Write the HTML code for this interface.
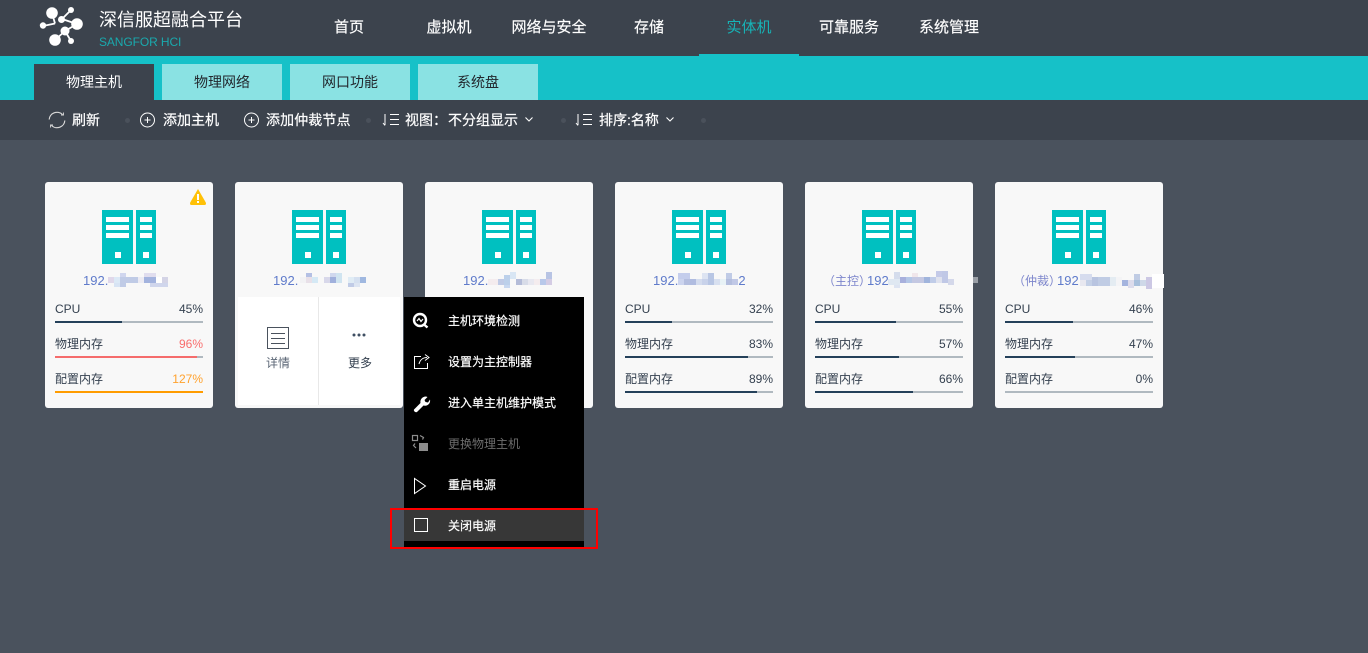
<!DOCTYPE html>
<html lang="zh">
<head>
<meta charset="utf-8">
<title>深信服超融合平台</title>
<style>
html,body{margin:0;padding:0;width:1368px;height:653px;overflow:hidden;background:#4a525d}
body{position:relative;font-family:"Liberation Sans","Noto Sans CJK SC",sans-serif;color:#fff}
.a{position:absolute;white-space:nowrap}
#hd{left:0;top:0;width:1368px;height:56px;background:#3c434d}
#strip{left:0;top:56px;width:1368px;height:44px;background:#16c1c8}
#tb{left:0;top:100px;width:1368px;height:40px;background:#3c434d}
.nav{top:18px;width:100px;text-align:center;font-size:15px;line-height:20px;color:#fff;-webkit-text-stroke:.15px #fff}
.tab{top:64px;width:120px;height:36px;line-height:36px;text-align:center;font-size:14px;background:#8ae2e3;color:#22272d}
.t{top:110px;line-height:20px;font-size:14px;color:#fff;-webkit-text-stroke:.2px #fff}
.dot{top:118px;width:5px;height:5px;border-radius:3px;background:#4a515b}
.card{position:absolute;top:182px;width:168px;height:226px;background:#f8f8f8;border-radius:3px}
.srv{position:absolute;left:57px;top:28px;width:54px;height:54px}
.ip{position:absolute;top:91px;line-height:16px;font-size:13px;color:#5f7bcb;white-space:nowrap}
.ic{font-size:12px;color:#7d86cc}
.l,.p{position:absolute;font-size:12px;line-height:16px;color:#34404f;white-space:nowrap}
.l{left:10px}.p{right:10px}
.r1{top:119px}.r2{top:154px}.r3{top:189px}
.b{position:absolute;left:10px;width:148px;height:2px;background:#b0b9c0}
.b i{display:block;height:2px;background:#25415a}
.b1{top:139px}.b2{top:174px}.b3{top:209px}
#menu{left:404px;top:297px;width:180px;height:251px;background:#000}
#hi{left:404px;top:510px;width:180px;height:31px;background:#373737}
.m{left:448px;font-size:12px;line-height:16px;color:#fff;-webkit-text-stroke:.2px #fff}
#red{left:390px;top:508px;width:204px;height:37px;border:2px solid #f00}
</style>
</head>
<body>
<svg width="0" height="0" style="position:absolute"><defs>
<symbol id="s" viewBox="0 0 54 54"><path fill="#00c0c0" d="M0 0h31v54H0zM34 0h20v54H34z"/><path fill="#fff" d="M4 7h23v5H4zM4 15h23v5H4zM4 23h23v5H4zM13 42h6v6h-6zM38 7h12v5H38zM38 15h12v5H38zM38 23h12v5H38zM41 42h6v6h-6z"/></symbol>
</defs></svg>

<div class="a" id="hd"></div>
<div class="a" id="strip"></div>
<div class="a" id="tb"></div>

<svg class="a" style="left:36px;top:4px" width="50" height="46" viewBox="36 4 50 46">
<g stroke="#fff" stroke-width="1.800" fill="none"><path d="M43 26L55 23.500M52 13L55 23.500M71 10L62 19M62 19L77 24M65 31L55 40M65 31L71 41M65 31L77 24"/></g>
<g fill="#fff"><circle cx="52" cy="13" r="5.800"/><circle cx="77" cy="24" r="5.800"/><circle cx="55" cy="40" r="5.800"/><circle cx="43" cy="25.500" r="3.200"/><circle cx="71" cy="10" r="3"/><circle cx="71" cy="41" r="3"/><circle cx="65" cy="31" r="4.500"/><circle cx="61.500" cy="19.500" r="3.500"/></g>
</svg>
<div class="a" style="left:99px;top:7px;font-size:18px;line-height:26px">深信服超融合平台</div>
<div class="a" style="left:99px;top:34px;font-size:12px;line-height:16px;color:#1aa9ad;letter-spacing:-.1px">SANGFOR HCI</div>

<div class="a nav" style="left:299px">首页</div>
<div class="a nav" style="left:399px">虚拟机</div>
<div class="a nav" style="left:499px">网络与安全</div>
<div class="a nav" style="left:599px">存储</div>
<div class="a nav" style="left:699px;color:#17b3b6;-webkit-text-stroke:0">实体机</div>
<div class="a nav" style="left:799px">可靠服务</div>
<div class="a nav" style="left:899px">系统管理</div>
<div class="a" style="left:699px;top:54px;width:100px;height:2px;background:#16c1c8"></div>

<div class="a tab" style="left:34px;background:#3c434d;color:#fff">物理主机</div>
<div class="a tab" style="left:162px">物理网络</div>
<div class="a tab" style="left:290px">网口功能</div>
<div class="a tab" style="left:418px">系统盘</div>

<svg class="a" style="left:48px;top:111px" width="18" height="18" viewBox="0 0 18 18" fill="none" stroke="#d8d8d8" stroke-width="1.200"><path d="M1.200 8.500A7.800 7.500 0 0 1 14.500 3.500M16.800 9.500A7.800 7.500 0 0 1 3.500 14.500"/><path d="M15.500 1.500V4H13M2.500 16.500V14H5" stroke-width=".9"/></svg>
<div class="a t" style="left:72px">刷新</div>
<div class="a dot" style="left:125px"></div>
<svg class="a" style="left:140px;top:112px" width="16" height="16" viewBox="0 0 16 16" fill="none" stroke="#fff" stroke-width="1"><circle cx="7.500" cy="8" r="7"/><path d="M4.500 8h6M7.500 5v6"/></svg>
<div class="a t" style="left:163px">添加主机</div>
<svg class="a" style="left:244px;top:112px" width="16" height="16" viewBox="0 0 16 16" fill="none" stroke="#fff" stroke-width="1"><circle cx="7.500" cy="8" r="7"/><path d="M4.500 8h6M7.500 5v6"/></svg>
<div class="a t" style="left:266px;letter-spacing:.1px">添加仲裁节点</div>
<div class="a dot" style="left:366px"></div>
<svg class="a" style="left:382px;top:113px" width="18" height="14" viewBox="0 0 18 14" fill="none" stroke="#fff" stroke-width="1"><path d="M3 1v11M1 10l2 2.500M8 1.500h9M8 6.500h9M8 11.500h9"/></svg>
<div class="a t" style="left:405px">视图：</div>
<div class="a t" style="left:448px">不分组显示</div>
<svg class="a" style="left:524px;top:116px" width="10" height="7" viewBox="0 0 10 7" fill="none" stroke="#fff" stroke-width="1.100"><path d="M1.500 1.500L5 5L8.500 1.500"/></svg>
<div class="a dot" style="left:561px"></div>
<svg class="a" style="left:575px;top:113px" width="18" height="14" viewBox="0 0 18 14" fill="none" stroke="#fff" stroke-width="1"><path d="M3 1v11M1 10l2 2.500M8 1.500h9M8 6.500h9M8 11.500h9"/></svg>
<div class="a t" style="left:599px">排序:名称</div>
<svg class="a" style="left:665px;top:116px" width="10" height="7" viewBox="0 0 10 7" fill="none" stroke="#fff" stroke-width="1.100"><path d="M1.500 1.500L5 5L8.500 1.500"/></svg>
<div class="a dot" style="left:701px"></div>

<!-- card 1 -->
<div class="card" style="left:45px">
<svg style="position:absolute;left:145px;top:7px" width="16" height="16" viewBox="0 0 16 16"><path fill="#ffc107" d="M8 0L15.800 13.500Q16.500 16 14.500 16H1.500Q-.5 16 .2 13.500Z"/><path fill="#fff" d="M7 5h2v6H7zM7 12h2v2H7z"/></svg>
<svg class="srv"><use href="#s"/></svg>
<div class="ip" style="left:38px">192.</div>
<div class="l r1">CPU</div><div class="p r1">45%</div><div class="b b1"><i style="width:67px"></i></div>
<div class="l r2">物理内存</div><div class="p r2" style="color:#f96d6d">96%</div><div class="b b2"><i style="width:142px;background:#f56c6c"></i></div>
<div class="l r3">配置内存</div><div class="p r3" style="color:#ffa22e">127%</div><div class="b b3"><i style="width:148px;background:#ff9c00"></i></div>
</div>

<!-- card 2 -->
<div class="card" style="left:235px">
<svg class="srv"><use href="#s"/></svg>
<div class="ip" style="left:38px">192.</div>
<div style="position:absolute;left:3px;top:115px;width:162px;height:108px;background:#fff"></div>
<div style="position:absolute;left:83px;top:115px;width:1px;height:108px;background:#e8e8e8"></div>
<svg style="position:absolute;left:32px;top:145px" width="22" height="22" viewBox="0 0 22 22" fill="none" stroke="#4a525d"><rect x=".5" y=".5" width="21" height="21"/><path d="M4 6.500h14M4 11.500h14M4 16.500h14"/></svg>
<div class="l" style="left:31px;top:173px;color:#5b6675">详情</div>
<svg style="position:absolute;left:117px;top:150px" width="14" height="6" viewBox="0 0 14 6" fill="#3f4f63"><circle cx="2" cy="3" r="1.500"/><circle cx="7" cy="3" r="1.500"/><circle cx="12" cy="3" r="1.500"/></svg>
<div class="l" style="left:113px;top:173px">更多</div>
</div>

<!-- card 3 -->
<div class="card" style="left:425px">
<svg class="srv"><use href="#s"/></svg>
<div class="ip" style="left:38px">192.</div>
</div>

<!-- card 4 -->
<div class="card" style="left:615px">
<svg class="srv"><use href="#s"/></svg>
<div class="ip" style="left:38px">192.<span style="margin-left:60px">2</span></div>
<div class="l r1">CPU</div><div class="p r1">32%</div><div class="b b1"><i style="width:47px"></i></div>
<div class="l r2">物理内存</div><div class="p r2">83%</div><div class="b b2"><i style="width:123px"></i></div>
<div class="l r3">配置内存</div><div class="p r3">89%</div><div class="b b3"><i style="width:132px"></i></div>
</div>

<!-- card 5 -->
<div class="card" style="left:805px">
<svg class="srv"><use href="#s"/></svg>
<div class="ip ic" style="left:18px">（主控）</div>
<div class="ip" style="left:62px">192</div>
<div class="l r1">CPU</div><div class="p r1">55%</div><div class="b b1"><i style="width:81px"></i></div>
<div class="l r2">物理内存</div><div class="p r2">57%</div><div class="b b2"><i style="width:84px"></i></div>
<div class="l r3">配置内存</div><div class="p r3">66%</div><div class="b b3"><i style="width:98px"></i></div>
</div>

<!-- card 6 -->
<div class="card" style="left:995px">
<svg class="srv"><use href="#s"/></svg>
<div class="ip ic" style="left:18px">（仲裁）</div>
<div class="ip" style="left:62px">192</div>
<div class="l r1">CPU</div><div class="p r1">46%</div><div class="b b1"><i style="width:68px"></i></div>
<div class="l r2">物理内存</div><div class="p r2">47%</div><div class="b b2"><i style="width:70px"></i></div>
<div class="l r3">配置内存</div><div class="p r3">0%</div><div class="b b3"><i style="width:0"></i></div>
</div>

<!-- mosaics -->
<svg class="a" style="left:0;top:0" width="1368" height="653">
<g fill="#c0cbe6">
<rect x="108" y="277" width="6" height="6" fill="#e0d8ea"/><rect x="114" y="277" width="6" height="6" fill="#dce9f6"/><rect x="114" y="283" width="6" height="4" fill="#d8e4f4"/><rect x="120" y="277" width="6" height="6"/><rect x="120" y="283" width="6" height="4"/><rect x="120" y="273" width="6" height="4" fill="#d0d6ee"/><rect x="126" y="277" width="6" height="6"/><rect x="132" y="277" width="6" height="6"/><rect x="138" y="277" width="6" height="6" fill="#ecebf3"/><rect x="144" y="277" width="6" height="6" fill="#a3b3de"/><rect x="150" y="277" width="6" height="6" fill="#a3b3de"/><rect x="144" y="273" width="12" height="4" fill="#e0ddee"/><rect x="162" y="277" width="6" height="6" fill="#d4d4e6"/><rect x="150" y="283" width="18" height="4" fill="#d0d6ec"/><rect x="156" y="277" width="6" height="6" fill="#fff"/>

<rect x="300" y="277" width="6" height="6" fill="#f2f2f4"/><rect x="306" y="273" width="6" height="4" fill="#b4c0e4"/><rect x="306" y="277" width="6" height="6" fill="#e8e0e8"/><rect x="312" y="277" width="6" height="6" fill="#d5e9f5"/><rect x="324" y="277" width="6" height="6" fill="#d8d8ea"/><rect x="330" y="273" width="6" height="4" fill="#d0d8ee"/><rect x="330" y="277" width="6" height="6" fill="#a0b0dc"/><rect x="336" y="273" width="6" height="10" fill="#d0e4f0"/><rect x="348" y="277" width="6" height="6" fill="#e0ecf5"/><rect x="354" y="277" width="6" height="6" fill="#d5e0f0"/><rect x="360" y="277" width="6" height="6" fill="#a0b8e0"/><rect x="348" y="283" width="6" height="4"/><rect x="354" y="283" width="6" height="4" fill="#dde5f2"/>

<rect x="488" y="279" width="6" height="6" fill="#f4ecee"/><rect x="494" y="279" width="6" height="6" fill="#f4ecee"/><rect x="498" y="279" width="6" height="6"/><rect x="504" y="275" width="6" height="10" fill="#bcd0ea"/><rect x="504" y="285" width="6" height="3" fill="#c8d8f0"/><rect x="510" y="272" width="6" height="7" fill="#d8e6f4"/><rect x="516" y="279" width="6" height="6" fill="#b4bcd8"/><rect x="522" y="279" width="6" height="6" fill="#d8dce8"/><rect x="528" y="279" width="6" height="6" fill="#e8e8f0"/><rect x="534" y="279" width="6" height="6" fill="#f4ecee"/><rect x="540" y="279" width="6" height="6" fill="#b8c8ea"/><rect x="546" y="279" width="6" height="6" fill="#d4cce4"/><rect x="546" y="272" width="6" height="7" fill="#b8c4e4"/>

<rect x="678" y="273" width="12" height="6" fill="#c4cdec"/><rect x="678" y="279" width="6" height="6" fill="#ccd4ee"/><rect x="684" y="279" width="6" height="6" fill="#b4bedf"/><rect x="690" y="279" width="6" height="6" fill="#b0bce0"/><rect x="696" y="279" width="6" height="6" fill="#d4dcee"/><rect x="702" y="279" width="6" height="6" fill="#c8d2ea"/><rect x="702" y="273" width="6" height="6" fill="#dde4f2"/><rect x="708" y="273" width="6" height="12" fill="#b8c6e4"/><rect x="714" y="279" width="6" height="6" fill="#d8e0f0"/><rect x="720" y="279" width="6" height="6" fill="#e8f2f6"/><rect x="726" y="273" width="6" height="6" fill="#c0cbe6"/><rect x="726" y="279" width="6" height="6" fill="#b4bede"/><rect x="732" y="279" width="6" height="6" fill="#c0c8e6"/>

<rect x="888" y="279" width="12" height="6" fill="#dfe8f2"/><rect x="894" y="272" width="6" height="7" fill="#d4dcec"/><rect x="894" y="285" width="6" height="3" fill="#dde4f2"/><rect x="900" y="277" width="6" height="6" fill="#a8b0dc"/><rect x="906" y="277" width="6" height="6" fill="#b4c6e6"/><rect x="912" y="273" width="6" height="4" fill="#f0e6ea"/><rect x="912" y="277" width="12" height="6" fill="#c4c8e2"/><rect x="924" y="277" width="6" height="6" fill="#a0b4dc"/><rect x="930" y="277" width="6" height="6" fill="#c0cce8"/><rect x="936" y="271" width="6" height="6" fill="#c4cae8"/><rect x="942" y="271" width="6" height="12" fill="#c0c8e6"/><rect x="948" y="279" width="6" height="6" fill="#d4d8ea"/><rect x="936" y="277" width="6" height="6" fill="#dfe2ee"/>
<rect x="973" y="277" width="5" height="6" fill="#9a9fa6"/>

<rect x="1080" y="274" width="12" height="6" fill="#d6dcee"/><rect x="1080" y="280" width="6" height="6" fill="#e8e8f0"/><rect x="1086" y="280" width="6" height="6" fill="#c4d0e6"/><rect x="1092" y="277" width="6" height="9" fill="#b8c4e0"/><rect x="1098" y="277" width="12" height="9" fill="#c0cce4"/><rect x="1110" y="277" width="6" height="9" fill="#e4ecf2"/><rect x="1116" y="277" width="6" height="9" fill="#f4f4f6"/><rect x="1122" y="280" width="12" height="6" fill="#a4b4de"/><rect x="1134" y="274" width="6" height="6" fill="#c0cce4"/><rect x="1134" y="280" width="6" height="6" fill="#a8c0dc"/><rect x="1128" y="280" width="6" height="8" fill="#dcdcec"/><rect x="1140" y="280" width="6" height="6" fill="#ced8e8"/><rect x="1146" y="277" width="6" height="12" fill="#ccc8e4"/><rect x="1152" y="274" width="12" height="14" fill="#fff"/>
</g>
</svg>

<!-- dropdown -->
<div class="a" id="menu"></div>
<div class="a" id="hi"></div>

<svg class="a" style="left:411px;top:311px" width="20" height="20" viewBox="0 0 20 20" fill="none" stroke="#fff"><circle cx="9" cy="9" r="6" stroke-width="2.400"/><path d="M13 13.500L16.500 16.500" stroke-width="2.400"/><path d="M6 10L8 7.500L10 10.500L12 8" stroke-width="1.200"/></svg>
<div class="a m" style="top:313px">主机环境检测</div>

<svg class="a" style="left:412px;top:353px" width="20" height="18" viewBox="0 0 20 18" fill="none" stroke="#fff" stroke-width="1"><path d="M9 3.500H2.500V15.500H15.500V10M7 11C8 7 11 4.500 15 4.500M13 1.500L17 4.500L13 7.500"/></svg>
<div class="a m" style="top:354px">设置为主控制器</div>

<svg class="a" style="left:413px;top:395px" width="18" height="18" viewBox="0 0 18 18" fill="#fff"><path d="M1 14.500L7.500 8C6.800 5 9 1.500 13 1.500L14.500 2L11.500 5L12.500 7L15 7.500L17 4.500C17.800 8.500 14.500 11.500 10.500 10.500L4 17C2.500 17.800 .3 16 1 14.500Z"/></svg>
<div class="a m" style="top:395px">进入单主机维护模式</div>

<svg class="a" style="left:411px;top:434px" width="18" height="18" viewBox="0 0 18 18" fill="none" stroke="#8d8d8d" stroke-width="1.200"><rect x="1.500" y="1.500" width="5" height="5"/><path d="M9 1.500L12.500 3.500L11.500 5.500M4 9.500L2.500 11.500L5 14"/><rect x="8" y="9" width="9" height="8" fill="#8d8d8d" stroke="none"/></svg>
<div class="a m" style="top:436px;color:#6d6d6d;-webkit-text-stroke:0">更换物理主机</div>

<svg class="a" style="left:413px;top:477px" width="14" height="18" viewBox="0 0 14 18" fill="none" stroke="#fff" stroke-width="1"><path d="M1.500 1.500V16.500L12.500 9Z"/></svg>
<div class="a m" style="top:477px">重启电源</div>

<svg class="a" style="left:414px;top:518px" width="14" height="14" viewBox="0 0 14 14" fill="none" stroke="#fff" stroke-width="1"><rect x=".5" y=".5" width="13" height="13"/></svg>
<div class="a m" style="top:518px">关闭电源</div>

<div class="a" id="red"></div>
</body>
</html>
